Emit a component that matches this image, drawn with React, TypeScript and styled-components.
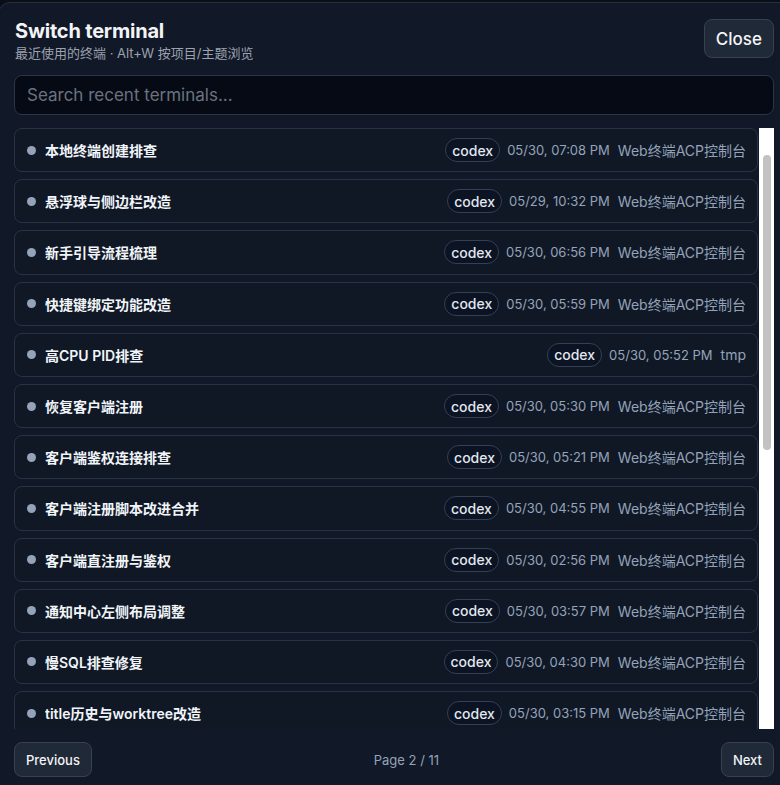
import React from "react";
import styled, { createGlobalStyle } from "styled-components";

const Global = createGlobalStyle`
  html, body { margin: 0; padding: 0; background: #0a0e16; overflow: hidden; }
  body { font-family: Inter, "Noto Sans CJK SC", "Noto Sans", sans-serif; -webkit-font-smoothing: antialiased; }
  * { box-sizing: border-box; }
`;

const Dialog = styled.div`
  margin: 2px -16px 0 -2px;
  height: 800px;
  background: #111827;
  border: 1px solid #263041;
  border-radius: 12px;
  padding: 16px 21px 0 15px;
  display: flex;
  flex-direction: column;
`;

const Header = styled.div`
  display: flex;
  justify-content: space-between;
  align-items: flex-start;
`;

const TitleBlock = styled.div`
  display: flex;
  flex-direction: column;
  gap: 2px;
  padding-left: 1px;
`;

const Title = styled.h2`
  margin: 0;
  font-size: 20px;
  line-height: 24px;
  font-weight: 700;
  color: #f3f4f6;
  letter-spacing: -0.2px;
`;

const Subtitle = styled.div`
  font-size: 13px;
  line-height: 17px;
  color: #9ca3af;
`;

const Button = styled.button<{ $size?: "lg" | "sm" }>`
  font-family: inherit;
  background: #1f2937;
  border: 1px solid #374151;
  color: #f3f4f6;
  border-radius: 8px;
  cursor: pointer;
  height: ${(p) => (p.$size === "lg" ? "39px" : "35px")};
  padding: ${(p) => (p.$size === "lg" ? "0 11px" : "0 11px")};
  font-size: ${(p) => (p.$size === "lg" ? "17px" : "13px")};
  font-weight: 500;
`;

const Search = styled.input`
  margin-top: 13px;
  height: 40px;
  width: 100%;
  background: #050a14;
  border: 1px solid #2b3546;
  border-radius: 8px;
  padding: 0 12px;
  font-family: inherit;
  font-size: 17px;
  color: #e5e7eb;
  outline: none;
  &::placeholder { color: #6b7280; }
`;

const ListFrame = styled.div`
  margin-top: 13px;
  height: 601px;
  display: flex;
  gap: 1px;
`;

const List = styled.div`
  flex: 1;
  min-width: 0;
  overflow-y: auto;
  display: flex;
  flex-direction: column;
  gap: 7px;
  scrollbar-width: none;
  &::-webkit-scrollbar { display: none; }
`;

const Track = styled.div`
  flex: none;
  width: 15px;
  background: #ffffff;
  padding-top: 27px;
  display: flex;
  justify-content: center;
`;

const Thumb = styled.div`
  width: 8px;
  height: 295px;
  border-radius: 4px;
  background: #c2c2c2;
  margin-left: 1px;
`;

const Row = styled.div`
  flex: none;
  height: 44.2px;
  display: flex;
  align-items: center;
  gap: 9px;
  padding: 0 11px 0 12px;
  background: #101826;
  border: 1px solid #283346;
  border-radius: 8px;
`;

const Dot = styled.span`
  width: 9px;
  height: 9px;
  border-radius: 50%;
  background: #94a3b8;
  flex: none;
`;

const RowTitle = styled.span`
  flex: 1;
  font-size: 14px;
  font-weight: 600;
  color: #f1f5f9;
  white-space: nowrap;
  overflow: hidden;
  text-overflow: ellipsis;
`;

const Meta = styled.div`
  display: flex;
  align-items: center;
  flex: none;
`;

const Badge = styled.span`
  height: 24px;
  display: inline-flex;
  align-items: center;
  padding: 0 6px;
  border: 1px solid #334155;
  border-radius: 999px;
  background: #0c1322;
  color: #e2e8f0;
  font-size: 14px;
  font-weight: 500;
  margin-right: 7px;
`;

const DateText = styled.span`
  font-size: 13px;
  color: #94a3b8;
  margin-right: 8px;
`;

const Project = styled.span`
  font-size: 14px;
  color: #94a3b8;
`;

const Footer = styled.div`
  margin-top: 13px;
  display: flex;
  align-items: center;
  justify-content: space-between;
`;

const PageInfo = styled.span`
  font-size: 13px;
  color: #94a3b8;
`;

const WEB = "Web终端ACP控制台";

const items: [string, string, string][] = [
  ["本地终端创建排查", "05/30, 07:08 PM", WEB],
  ["悬浮球与侧边栏改造", "05/29, 10:32 PM", WEB],
  ["新手引导流程梳理", "05/30, 06:56 PM", WEB],
  ["快捷键绑定功能改造", "05/30, 05:59 PM", WEB],
  ["高CPU PID排查", "05/30, 05:52 PM", "tmp"],
  ["恢复客户端注册", "05/30, 05:30 PM", WEB],
  ["客户端鉴权连接排查", "05/30, 05:21 PM", WEB],
  ["客户端注册脚本改进合并", "05/30, 04:55 PM", WEB],
  ["客户端直注册与鉴权", "05/30, 02:56 PM", WEB],
  ["通知中心左侧布局调整", "05/30, 03:57 PM", WEB],
  ["慢SQL排查修复", "05/30, 04:30 PM", WEB],
  ["title历史与worktree改造", "05/30, 03:15 PM", WEB],
  ["会话恢复逻辑修复", "05/30, 02:41 PM", WEB],
  ["终端标签页拖拽排序", "05/30, 02:10 PM", WEB],
  ["日志面板性能优化", "05/30, 01:48 PM", WEB],
  ["主题切换闪烁修复", "05/30, 01:22 PM", WEB],
  ["WebSocket重连策略", "05/30, 12:57 PM", WEB],
  ["命令面板搜索改进", "05/30, 12:31 PM", WEB],
  ["项目分组视图", "05/30, 11:46 AM", WEB],
  ["通知去重处理", "05/30, 11:12 AM", WEB],
  ["构建脚本清理", "05/30, 10:40 AM", "tmp"],
  ["权限弹窗文案调整", "05/30, 10:05 AM", WEB],
  ["终端输出截断排查", "05/30, 09:38 AM", WEB],
  ["快捷键冲突检测", "05/30, 09:02 AM", WEB],
];

export default function App() {
  return (
    <>
      <Global />
      <Dialog>
        <Header>
          <TitleBlock>
            <Title>Switch terminal</Title>
            <Subtitle>最近使用的终端 · Alt+W 按项目/主题浏览</Subtitle>
          </TitleBlock>
          <Button $size="lg">Close</Button>
        </Header>
        <Search placeholder="Search recent terminals..." />
        <ListFrame>
          <List>
            {items.map(([t, d, p], i) => (
              <Row key={i}>
                <Dot />
                <RowTitle>{t}</RowTitle>
                <Meta>
                  <Badge>codex</Badge>
                  <DateText>{d}</DateText>
                  <Project>{p}</Project>
                </Meta>
              </Row>
            ))}
          </List>
          <Track>
            <Thumb />
          </Track>
        </ListFrame>
        <Footer>
          <Button $size="sm">Previous</Button>
          <PageInfo>Page 2 / 11</PageInfo>
          <Button $size="sm">Next</Button>
        </Footer>
      </Dialog>
    </>
  );
}
